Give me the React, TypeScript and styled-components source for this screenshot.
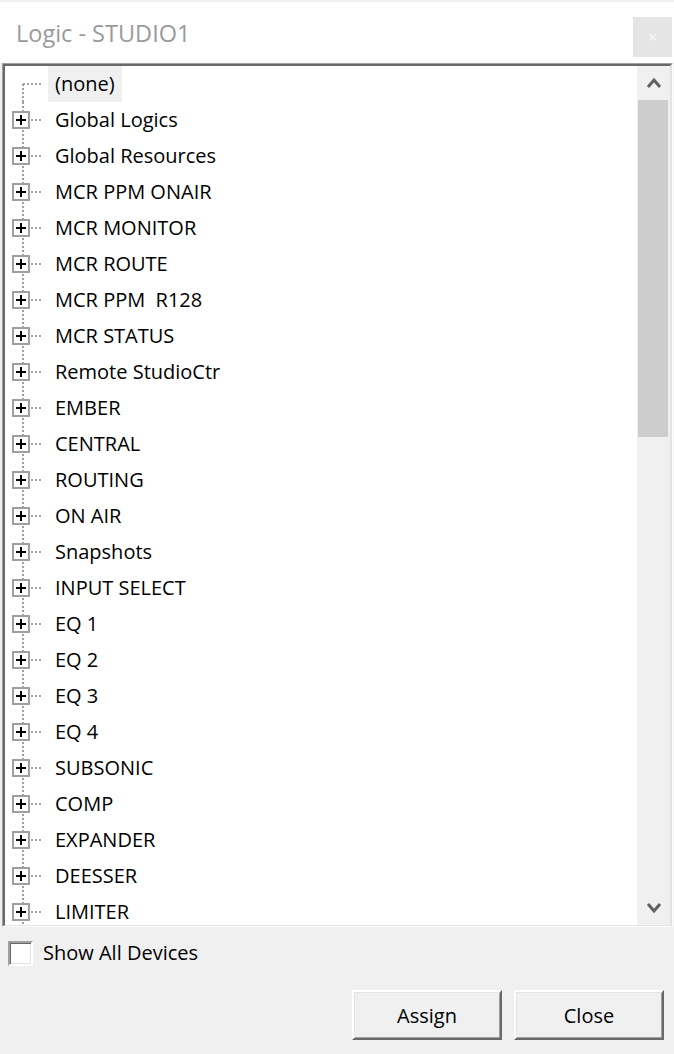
import React, {useState} from 'react';
import styled, {createGlobalStyle} from "styled-components";

const GlobalStyle = createGlobalStyle`
  html, body {
    margin: 0;
    padding: 0;
    background: #f0f0f0;
  }
`

const SWindow = styled.div`
  width: 674px;
  height: 1054px;
  background: #f0f0f0;
  display: flex;
  flex-direction: column;
  font-family: "Open Sans", "Noto Sans", sans-serif;
  font-size: 20px;
  color: #000;
  overflow: hidden;
`

const STitleBar = styled.div`
  height: 61px;
  border-top: 2px solid #f0f0f0;
  background: #ffffff;
  display: flex;
  align-items: flex-start;
  justify-content: space-between;
  padding-left: 16px;
  padding-right: 2px;
`

const STitle = styled.span`
  font-size: 23.5px;
  font-weight: 400;
  color: #9a9a9a;
  line-height: 32px;
  margin-top: 15px;
`

const SCloseX = styled.div`
  width: 39px;
  height: 40px;
  margin-top: 15px;
  background: #e5e5e5;
  color: #f8f8f8;
  font-size: 16px;
  display: flex;
  align-items: center;
  justify-content: center;
`

const SListFrame = styled.div`
  margin-left: 2px;
  width: 671px;
  height: 864px;
  box-sizing: border-box;
  border-style: solid;
  border-width: 1px;
  border-color: #a0a0a0 #ffffff #ffffff #a0a0a0;
  display: flex;
`

const SListInner = styled.div`
  flex: 1;
  display: flex;
  border-style: solid;
  border-width: 2px 2px 1px 2px;
  border-color: #696969 #e3e3e3 #e3e3e3 #696969;
  background: #ffffff;
  overflow: hidden;
`

const STree = styled.ul`
  flex: 1;
  margin: 0;
  padding: 0;
  list-style: none;
  overflow: hidden;
`

const SRow = styled.li`
  height: 36px;
  display: flex;
  align-items: center;
`

const SLabel = styled.span<{ $selected?: boolean }>`
  height: 36px;
  line-height: 36px;
  padding: 0 7px;
  white-space: pre;
  background: ${p => p.$selected ? '#f0f0f0' : 'transparent'};
`

const SScrollBar = styled.div`
  width: 33px;
  background: #f0f0f0;
  display: flex;
  flex-direction: column;
`

const SScrollArrow = styled.div`
  height: 34px;
  display: flex;
  align-items: center;
  justify-content: center;
`

const SScrollTrack = styled.div`
  flex: 1;
  padding: 0 2px 0 1px;
`

const SScrollThumb = styled.div`
  height: 337px;
  background: #cdcdcd;
`

const SFooter = styled.div`
  flex: 1;
  display: flex;
  flex-direction: column;
  padding: 11px 10px 0 8px;
`

const SCheckRow = styled.div`
  display: flex;
  align-items: center;
  gap: 10px;
  cursor: default;
`

const SCheckText = styled.div`
  line-height: 30px;
`

const SCheckBox = styled.div<{ $checked: boolean }>`
  flex: none;
  width: 25px;
  height: 25px;
  box-sizing: border-box;
  background: #ffffff;
  border-style: solid;
  border-width: 2px;
  border-color: #a0a0a0 #ffffff #ffffff #a0a0a0;
  box-shadow: inset 1px 1px 0 #696969, inset -1px -1px 0 #e3e3e3;
  display: flex;
  align-items: center;
  justify-content: center;
`

const SButtons = styled.div`
  display: flex;
  justify-content: flex-end;
  gap: 12px;
  margin-top: 22px;
`

const SButton = styled.button`
  width: 150px;
  height: 50px;
  box-sizing: border-box;
  background: #f0f0f0;
  font-family: "Open Sans", "Noto Sans", sans-serif;
  font-size: 20px;
  color: #000;
  border-style: solid;
  border-width: 2px;
  border-color: #ffffff #696969 #696969 #ffffff;
  box-shadow: inset 1px 1px 0 #e3e3e3, inset -1px -1px 0 #a0a0a0;
  padding: 0;
  cursor: pointer;
`

const items = [
    '(none)',
    'Global Logics',
    'Global Resources',
    'MCR PPM ONAIR',
    'MCR MONITOR',
    'MCR ROUTE',
    'MCR PPM  R128',
    'MCR STATUS',
    'Remote StudioCtr',
    'EMBER',
    'CENTRAL',
    'ROUTING',
    'ON AIR',
    'Snapshots',
    'INPUT SELECT',
    'EQ 1',
    'EQ 2',
    'EQ 3',
    'EQ 4',
    'SUBSONIC',
    'COMP',
    'EXPANDER',
    'DEESSER',
    'LIMITER',
]

const TreeLines = ({first}: { first: boolean }) => (
    <svg width="43" height="36" viewBox="0 0 43 36">
        <line x1="18" y1={first ? 18 : 0} x2="18" y2="36" stroke="#a0a0a0" strokeWidth="2" strokeDasharray="2 2"/>
        <line x1={first ? 18 : 26} y1="18" x2="36" y2="18" stroke="#a0a0a0" strokeWidth="2" strokeDasharray="2 2"/>
        {!first && (
            <g>
                <rect x="8" y="10" width="16" height="16" fill="#ffffff" stroke="#a0a0a0" strokeWidth="2"/>
                <line x1="11" y1="18" x2="21" y2="18" stroke="#000" strokeWidth="2"/>
                <line x1="16" y1="13" x2="16" y2="23" stroke="#000" strokeWidth="2"/>
            </g>
        )}
    </svg>
)

const Chevron = ({up}: { up: boolean }) => (
    <svg width="16" height="12" viewBox="0 0 16 12">
        <polyline points={up ? "2,10 8,3 14,10" : "2,2 8,9 14,2"} fill="none" stroke="#606060" strokeWidth="3"/>
    </svg>
)

const App = () => {
    const [showAll, setShowAll] = useState(false)
    return (
        <SWindow>
            <GlobalStyle/>
            <STitleBar>
                <STitle>Logic - STUDIO1</STitle>
                <SCloseX>×</SCloseX>
            </STitleBar>
            <SListFrame>
                <SListInner>
                    <STree>
                        {items.map((item, index) => (
                            <SRow key={index}>
                                <TreeLines first={index === 0}/>
                                <SLabel $selected={index === 0}>{item}</SLabel>
                            </SRow>
                        ))}
                    </STree>
                    <SScrollBar>
                        <SScrollArrow><Chevron up={true}/></SScrollArrow>
                        <SScrollTrack><SScrollThumb/></SScrollTrack>
                        <SScrollArrow><Chevron up={false}/></SScrollArrow>
                    </SScrollBar>
                </SListInner>
            </SListFrame>
            <SFooter>
                <SCheckRow onClick={() => setShowAll(!showAll)}>
                    <SCheckBox $checked={showAll}>
                        {showAll && (
                            <svg width="15" height="13" viewBox="0 0 15 13">
                                <polyline points="1,7 5,11 14,1" fill="none" stroke="#000" strokeWidth="2"/>
                            </svg>
                        )}
                    </SCheckBox>
                    <SCheckText>Show All Devices</SCheckText>
                </SCheckRow>
                <SButtons>
                    <SButton>Assign</SButton>
                    <SButton>Close</SButton>
                </SButtons>
            </SFooter>
        </SWindow>
    );
};

export default App;
